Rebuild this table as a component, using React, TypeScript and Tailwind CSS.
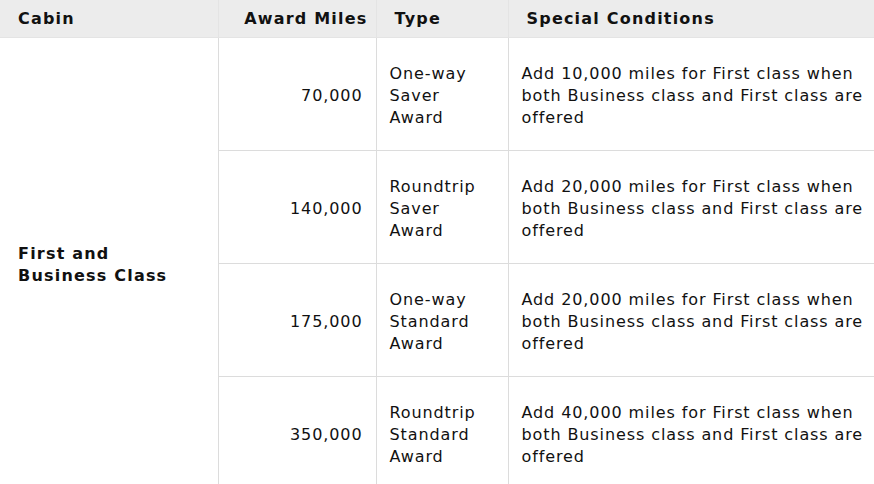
import React from "react";

const rows = [
  { miles: "70,000", type: ["One-way", "Saver", "Award"], extra: "10,000" },
  { miles: "140,000", type: ["Roundtrip", "Saver", "Award"], extra: "20,000" },
  { miles: "175,000", type: ["One-way", "Standard", "Award"], extra: "20,000" },
  { miles: "350,000", type: ["Roundtrip", "Standard", "Award"], extra: "40,000" },
];

const App: React.FC = () => {
  return (
    <div className="w-[874px] h-[484px] overflow-hidden bg-white text-[#111] font-['Verdana','DejaVu_Sans',sans-serif] text-[16px] leading-[22px] tracking-[0.9px]">
      <table className="w-full border-collapse table-fixed">
        <colgroup>
          <col className="w-[218px]" />
          <col className="w-[158px]" />
          <col className="w-[132px]" />
          <col />
        </colgroup>
        <thead>
          <tr className="bg-[#ececec] h-[37px] tracking-[1.2px]">
            <th className="text-left pl-[18px] pt-[2px] border-b border-[#e4e4e4] font-bold">Cabin</th>
            <th className="text-right pr-[8px] pt-[2px] border-l border-b border-[#e4e4e4] font-bold">Award Miles</th>
            <th className="text-left pl-[18px] pt-[2px] border-l border-b border-[#e4e4e4] font-bold">Type</th>
            <th className="text-left pl-[18px] pt-[2px] border-l border-b border-[#e4e4e4] font-bold">Special Conditions</th>
          </tr>
        </thead>
        <tbody>
          {rows.map((r, i) => (
            <tr key={i} className="h-[113px]">
              {i === 0 && (
                <td rowSpan={4} className="pl-[18px] pt-[4px] align-middle font-bold tracking-[1.2px]">
                  First and
                  <br />
                  Business Class
                </td>
              )}
              <td className="text-right pr-[13px] pt-[4px] border-l border-b border-[#dcdcdc] align-middle">{r.miles}</td>
              <td className="pl-[13px] pt-[4px] border-l border-b border-[#dcdcdc] align-middle">
                {r.type.map((t) => (
                  <div key={t}>{t}</div>
                ))}
              </td>
              <td className="pl-[13px] pr-[2px] pt-[4px] border-l border-b border-[#dcdcdc] align-middle">
                Add {r.extra} miles for First class when
                <br />
                both Business class and First class are
                <br />
                offered
              </td>
            </tr>
          ))}
        </tbody>
      </table>
    </div>
  );
};

export default App;
